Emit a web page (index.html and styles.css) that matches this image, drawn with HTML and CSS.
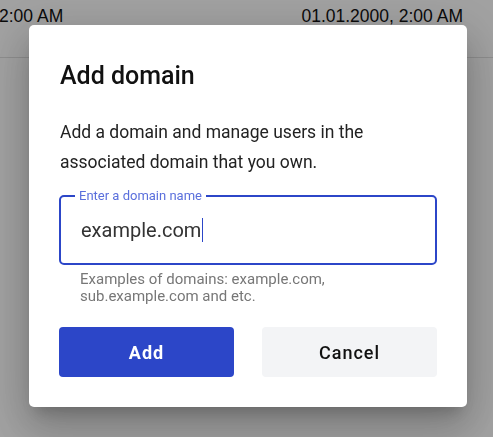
FILE: index.html
```html
<!DOCTYPE html>
<html>
<head>
<meta charset="utf-8">
<link rel="stylesheet" href="styles.css">
</head>
<body>
<div class="page">
  <div class="row">
    <span>2:00 AM</span>
    <span>01.01.2000, 2:00 AM</span>
  </div>
</div>
<div class="overlay">
  <div class="dialog">
    <h2 class="title">Add domain</h2>
    <p class="desc">Add a domain and manage users in the associated domain that you own.</p>
    <fieldset class="field">
      <legend class="label">Enter a domain name</legend>
      <div class="value">example.com<span class="caret"></span></div>
    </fieldset>
    <p class="helper">Examples of domains: example.com,<br>sub.example.com and etc.</p>
    <div class="actions">
      <button class="btn primary">Add</button>
      <button class="btn secondary">Cancel</button>
    </div>
  </div>
</div>
</body>
</html>
```
FILE: styles.css
```css
* { box-sizing: border-box; }
html, body { margin: 0; height: 100%; }
body {
  font-family: Roboto, "Noto Sans", sans-serif;
  background: #fff;
  color: #111;
}
.page { height: 100%; }
.row {
  display: flex;
  justify-content: space-between;
  height: 58px;
  padding: 6px 30px 0 0;
  border-bottom: 1px solid #e0e0e0;
  font-size: 17.5px;
  font-family: "Liberation Sans", Arial, sans-serif;
  margin-left: -1px;
}
.overlay {
  position: fixed;
  inset: 0;
  background: rgba(0, 0, 0, 0.37);
  display: flex;
  align-items: flex-start;
  padding: 25px 0 0 29px;
}
.dialog {
  width: 438px;
  height: 382px;
  background: #fff;
  border-radius: 5px;
  padding: 30px;
  box-shadow: 0 11px 15px -7px rgba(0,0,0,0.2), 0 24px 38px 3px rgba(0,0,0,0.14), 0 9px 46px 8px rgba(0,0,0,0.12);
}
.title {
  margin: 6px 0 0 1px;
  font-size: 25px;
  font-weight: 500;
  line-height: 30px;
  color: #111;
}
.desc {
  margin: 26px 0 0 1px;
  font-size: 17.5px;
  line-height: 30px;
  color: #222;
}
.field {
  margin: 12px 0 0 0;
  padding: 0 20px;
  height: 76px;
  border: 2px solid #2c46c8;
  border-radius: 5px;
  width: 378px;
}
.label {
  font-size: 13px;
  color: #5a6fdc;
  padding: 0 4px;
  margin-left: -6px;
  line-height: 14px;
}
.value {
  font-size: 20px;
  color: #333;
  line-height: 28px;
  margin-top: 13px;
  display: flex;
  align-items: center;
}
.caret {
  display: inline-block;
  width: 1px;
  height: 24px;
  background: #2c46c8;
  margin-left: 1px;
}
.helper {
  margin: 6px 0 0 21px;
  font-size: 15px;
  line-height: 17px;
  color: #777;
}
.actions {
  display: flex;
  gap: 28px;
  margin-top: 22px;
}
.btn {
  width: 175px;
  height: 50px;
  border: none;
  border-radius: 4px;
  font-family: Roboto, sans-serif;
  font-size: 18px;
  font-weight: 500;
  letter-spacing: 1px;
}
.primary { background: #2c46c8; color: #fff; font-weight: 700; }
.secondary { background: #f3f4f6; color: #111; }
```
